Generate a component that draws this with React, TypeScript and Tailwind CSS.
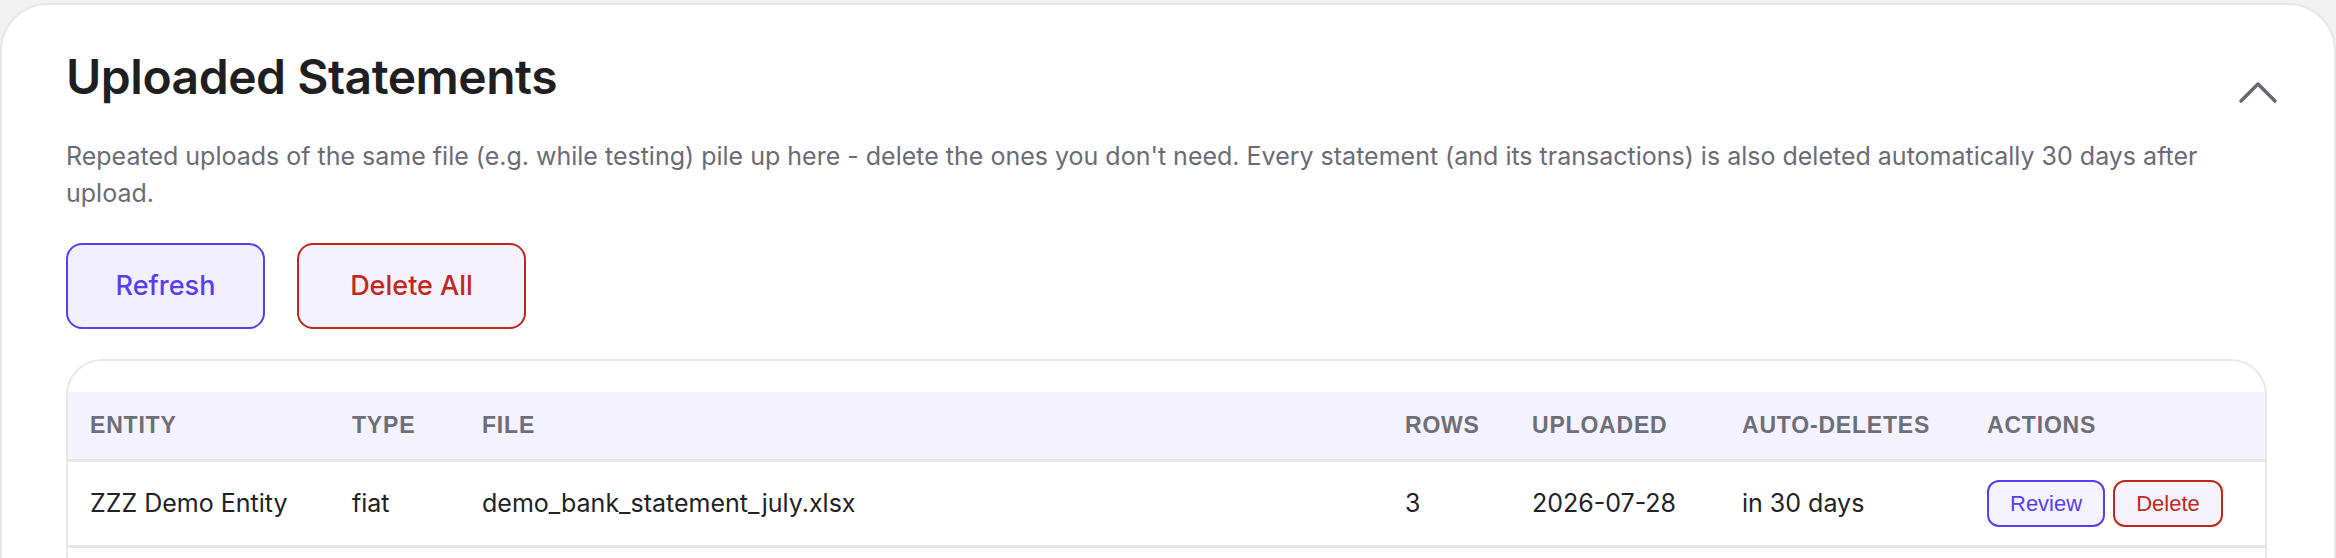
import React from 'react'

const columns = ['Entity', 'Type', 'File', 'Rows', 'Uploaded', 'Auto-deletes', 'Actions']

const statements = [
  {
    id: 'st-1',
    entity: 'ZZZ Demo Entity',
    type: 'fiat',
    file: 'demo_bank_statement_july.xlsx',
    rows: 3,
    uploaded: '2026-07-28',
    autoDeletes: 'in 30 days',
  },
]

const gridCols = 'grid grid-cols-[262px_130px_923px_127px_210px_245px_1fr] px-[22px]'

function ChevronUp() {
  return (
    <svg width="40" height="24" viewBox="0 0 40 24" fill="none" className="text-[#66666e]">
      <path d="M3 21 L20 4 L37 21" stroke="currentColor" strokeWidth="3.5" strokeLinecap="round" strokeLinejoin="round" />
    </svg>
  )
}

export default function App() {
  return (
    <div className="min-h-screen bg-[#f1f1f2] pt-[3px] font-['Inter',sans-serif]">
      <div className="bg-white border-2 border-[#e6e6e8] rounded-[48px] pl-[64px] pr-[56px] pt-[48px] pb-[200px]">
        <div className="flex items-start justify-between">
          <h1 className="text-[48px] leading-[48px] font-semibold text-[#1f1f22] tracking-[-0.01em]">Uploaded Statements</h1>
          <button className="mt-[27px]">
            <ChevronUp />
          </button>
        </div>
        <p className="mt-[34px] text-[25px] leading-[37px] text-[#6b6b75]">
          Repeated uploads of the same file (e.g. while testing) pile up here - delete the ones you don't need. Every statement (and its transactions) is also deleted automatically 30 days after upload.
        </p>

        <div className="flex gap-[32px] mt-[31px]">
          <button className="h-[86px] w-[199px] rounded-[16px] border-2 border-[#5a3cf5] bg-[#f2f0fe] text-[27px] font-medium text-[#5a3cf5]">
            Refresh
          </button>
          <button className="h-[86px] w-[229px] rounded-[16px] border-2 border-[#c2271c] bg-[#f4f2fd] text-[27px] font-medium text-[#c2271c]">
            Delete All
          </button>
        </div>

        <div className="mt-[30px] border-2 border-[#e8e8ea] rounded-[36px] pt-[31px] w-[2201px] pb-[120px]">
          <div className={`${gridCols} h-[70px] items-center bg-[#f4f2fe] border-b-[3px] border-[#e6e6e8]`}>
            {columns.map(c => (
              <div key={c} className="font-['Liberation_Sans',Arial,sans-serif] font-bold text-[23px] uppercase tracking-[0.035em] text-[#6e6e76]">
                {c}
              </div>
            ))}
          </div>
          {statements.map(s => (
            <div key={s.id} className={`${gridCols} h-[86px] items-center border-b-[3px] border-[#e6e6e8] text-[25px] text-[#222226]`}>
              <div>{s.entity}</div>
              <div>{s.type}</div>
              <div>{s.file}</div>
              <div>{s.rows}</div>
              <div>{s.uploaded}</div>
              <div>{s.autoDeletes}</div>
              <div className="flex gap-[8px] font-['Liberation_Sans',Arial,sans-serif] text-[22px]">
                <button className="h-[47px] px-[21px] rounded-[12px] border-2 border-[#5a3cf5] bg-[#f5f3ff] text-[#5a3cf5]">Review</button>
                <button className="h-[47px] px-[21px] rounded-[12px] border-2 border-[#c2271c] bg-[#f5f3ff] text-[#c2271c]">Delete</button>
              </div>
            </div>
          ))}
        </div>
      </div>
    </div>
  )
}
